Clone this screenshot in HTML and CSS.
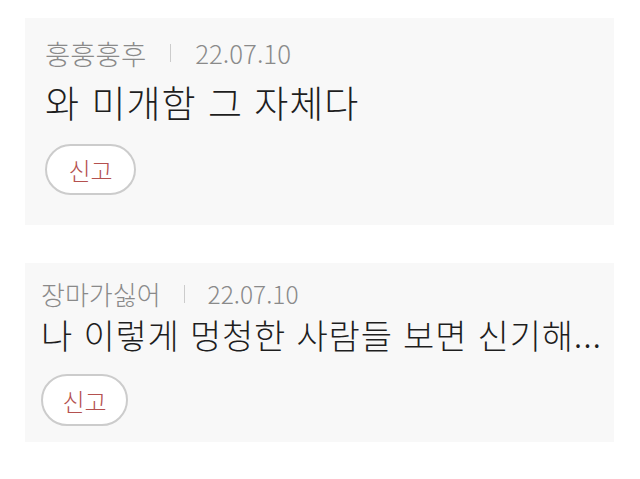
FILE: index.html
```html
<!DOCTYPE html>
<html lang="ko">
<head>
    <meta charset="UTF-8" />
    <meta name="viewport" content="width=device-width, initial-scale=1" />
    <title>댓글</title>
    <link rel="stylesheet" href="styles.css">
</head>
<body>

<div class="comments">
    <div class="comment first">
        <div class="meta">
            <span class="author">훙훙훙후</span>
            <span class="sep"></span>
            <span class="date">22.07.10</span>
        </div>
        <p class="text">와 미개함 그 자체다</p>
        <button class="report">신고</button>
    </div>

    <div class="comment second">
        <div class="meta">
            <span class="author">장마가싫어</span>
            <span class="sep"></span>
            <span class="date">22.07.10</span>
        </div>
        <p class="text">나 이렇게 멍청한 사람들 보면 신기해...</p>
        <button class="report">신고</button>
    </div>
</div>

</body>
</html>
```

FILE: styles.css
```css
body {
    font-family: "Noto Sans CJK KR", "Noto Sans", sans-serif;
    background: #fff;
    margin: 0;
}
.comments {
    display: flex;
    flex-direction: column;
    gap: 38px;
    padding: 18px 26px 0 25px;
}
.comment {
    background: #f8f8f8;
    padding: 20px 20px 30px;
}
.comment.second {
    padding: 16px 8px 16px 16px;
}
.meta {
    display: flex;
    align-items: center;
    line-height: 30px;
    color: #8a8a8a;
    font-weight: 300;
}
.author {
    font-size: 27.5px;
}
.date {
    font-size: 25.8px;
}
.second .author {
    font-size: 26px;
}
.second .date {
    font-size: 24.5px;
}
.sep {
    width: 1px;
    height: 18px;
    background: #ccc;
    margin: 0 24px;
}
.second .sep {
    margin: 0 23px;
}
.text {
    margin: 12px 0 20px;
    font-size: 37px;
    font-weight: 300;
    letter-spacing: 1px;
    line-height: 44px;
    white-space: nowrap;
    color: #1e1e1e;
}
.second .text {
    margin: 4px 0 17px;
    font-size: 34px;
    letter-spacing: 0.8px;
}
.report {
    width: 91px;
    height: 51px;
    border: 2px solid #ccc;
    border-radius: 26px;
    background: #fff;
    color: #b4514f;
    font-family: inherit;
    font-size: 24px;
    font-weight: 300;
    padding: 0;
    cursor: pointer;
}
.second .report {
    width: 87px;
    height: 52px;
}
```
